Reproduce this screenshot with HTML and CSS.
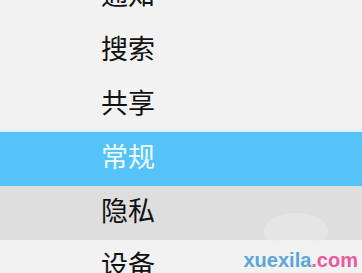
FILE: index.html
```html
<!DOCTYPE html>
<html lang="zh-CN">
<head>
    <meta charset="UTF-8">
    <title>设置</title>
    <link rel="stylesheet" href="styles.css">
</head>
<body>
    <ul class="menu">
        <li class="menu-item">通知</li>
        <li class="menu-item">搜索</li>
        <li class="menu-item">共享</li>
        <li class="menu-item active">常规</li>
        <li class="menu-item hover">隐私</li>
        <li class="menu-item">设备</li>
    </ul>

    <div class="watermark">
        <span class="logo-blob"></span>
        <span class="site">xuexila<span class="dot-com">.com</span></span>
    </div>
</body>
</html>
```

FILE: styles.css
```css
* {
    margin: 0;
    padding: 0;
    box-sizing: border-box;
}

html, body {
    width: 362px;
    height: 273px;
    overflow: hidden;
}

body {
    background-color: #f2f2f2;
    font-family: "Noto Sans CJK SC", "Microsoft YaHei", sans-serif;
    position: relative;
}

.menu {
    list-style: none;
    margin-top: -30px;
}

.menu-item {
    height: 54px;
    line-height: 48px;
    padding-left: 101px;
    font-size: 27px;
    color: #111111;
}

.menu-item.active {
    background-color: #56c3f8;
    color: #eefaff;
    box-shadow: 0 -2px 0 #d4f3fc;
}

.menu-item.hover {
    background-color: #dedede;
}

.watermark {
    position: absolute;
    right: 4px;
    bottom: 2px;
    width: 120px;
    height: 60px;
}

.logo-blob {
    position: absolute;
    left: 26px;
    top: 2px;
    width: 64px;
    height: 36px;
    border-radius: 50%;
    background-color: rgba(238, 238, 238, 0.45);
}

.site {
    position: absolute;
    right: 0;
    bottom: 0;
    font-family: "Liberation Sans", Arial, sans-serif;
    font-weight: bold;
    font-size: 20px;
    line-height: 22px;
    color: #5aa8d8;
}

.dot-com {
    color: #ea5a9d;
}
```
